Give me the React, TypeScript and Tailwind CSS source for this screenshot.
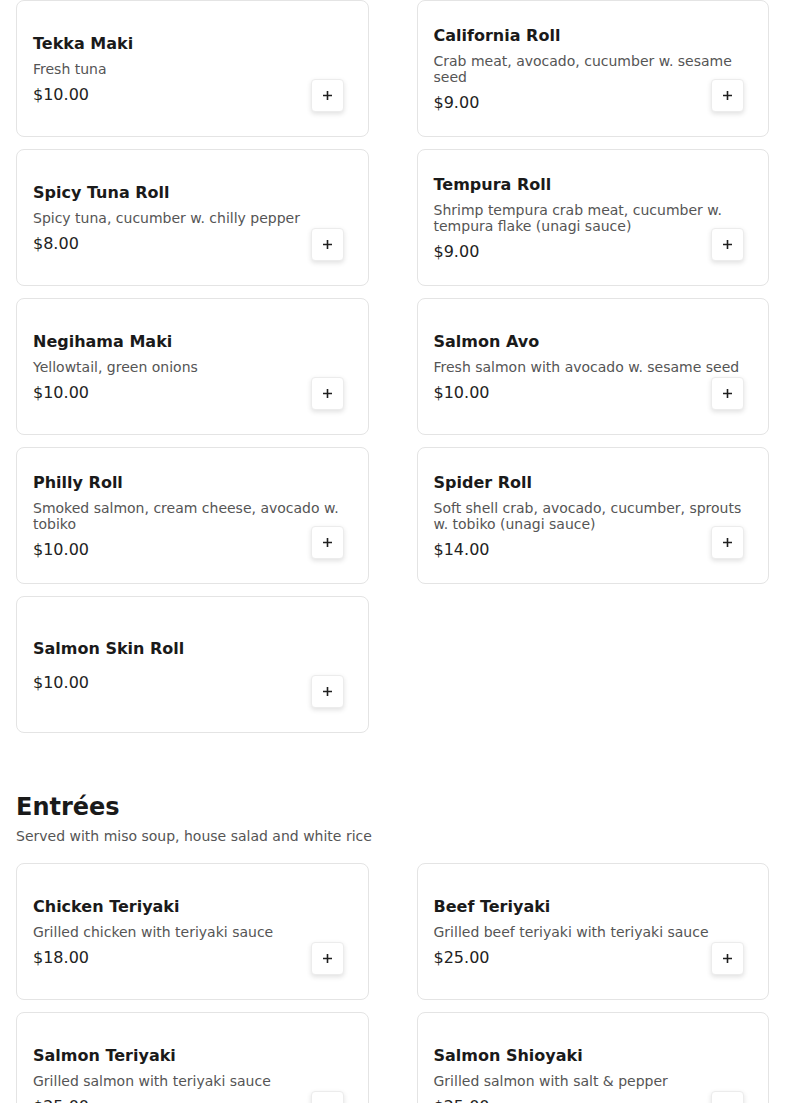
import React from "react";

type Item = { name: string; desc?: string; price: string };

const rolls: Item[] = [
  { name: "Tekka Maki", desc: "Fresh tuna", price: "$10.00" },
  { name: "California Roll", desc: "Crab meat, avocado, cucumber w. sesame seed", price: "$9.00" },
  { name: "Spicy Tuna Roll", desc: "Spicy tuna, cucumber w. chilly pepper", price: "$8.00" },
  { name: "Tempura Roll", desc: "Shrimp tempura crab meat, cucumber w. tempura flake (unagi sauce)", price: "$9.00" },
  { name: "Negihama Maki", desc: "Yellowtail, green onions", price: "$10.00" },
  { name: "Salmon Avo", desc: "Fresh salmon with avocado w. sesame seed", price: "$10.00" },
  { name: "Philly Roll", desc: "Smoked salmon, cream cheese, avocado w. tobiko", price: "$10.00" },
  { name: "Spider Roll", desc: "Soft shell crab, avocado, cucumber, sprouts w. tobiko (unagi sauce)", price: "$14.00" },
  { name: "Salmon Skin Roll", price: "$10.00" },
];

const entrees: Item[] = [
  { name: "Chicken Teriyaki", desc: "Grilled chicken with teriyaki sauce", price: "$18.00" },
  { name: "Beef Teriyaki", desc: "Grilled beef teriyaki with teriyaki sauce", price: "$25.00" },
  { name: "Salmon Teriyaki", desc: "Grilled salmon with teriyaki sauce", price: "$25.00" },
  { name: "Salmon Shioyaki", desc: "Grilled salmon with salt & pepper", price: "$25.00" },
];

const PlusIcon = () => (
  <svg width="11" height="11" viewBox="0 0 11 11" fill="none">
    <path d="M5.5 1v9M1 5.5h9" stroke="#1f1f1f" strokeWidth="1.6" />
  </svg>
);

const MenuCard = ({ item }: { item: Item }) => (
  <div className="relative flex min-h-[137px] flex-col justify-center rounded-lg border border-[#e4e4e4] bg-white px-4 pb-4 pt-[18px]">
    <h3 className="text-base font-bold leading-6 text-[#1a1a1a]">{item.name}</h3>
    {item.desc ? (
      <p className="mb-1.5 mt-[5px] text-sm leading-4 text-[#555555]">{item.desc}</p>
    ) : (
      <div className="h-2.5" />
    )}
    <p className="text-base leading-6 text-[#222222]">{item.price}</p>
    <button className="absolute bottom-6 right-6 flex size-[33px] items-center justify-center rounded border border-[#ececec] bg-white shadow-[0_2px_5px_rgba(0,0,0,0.12)]">
      <PlusIcon />
    </button>
  </div>
);

const Grid = ({ items }: { items: Item[] }) => (
  <div className="grid grid-cols-2 gap-x-12 gap-y-3">
    {items.map((it) => (
      <MenuCard key={it.name} item={it} />
    ))}
  </div>
);

export default function App() {
  return (
    <div className="min-h-screen bg-white px-4 font-['DejaVu_Sans',sans-serif]">
      <section>
        <Grid items={rolls} />
      </section>
      <section className="mt-[58px]">
        <h2 className="text-2xl font-bold leading-8 text-[#1a1a1a]">Entrées</h2>
        <p className="mt-[3px] text-sm leading-5 text-[#555555]">
          Served with miso soup, house salad and white rice
        </p>
        <div className="mt-[17px]">
          <Grid items={entrees} />
        </div>
      </section>
    </div>
  );
}
